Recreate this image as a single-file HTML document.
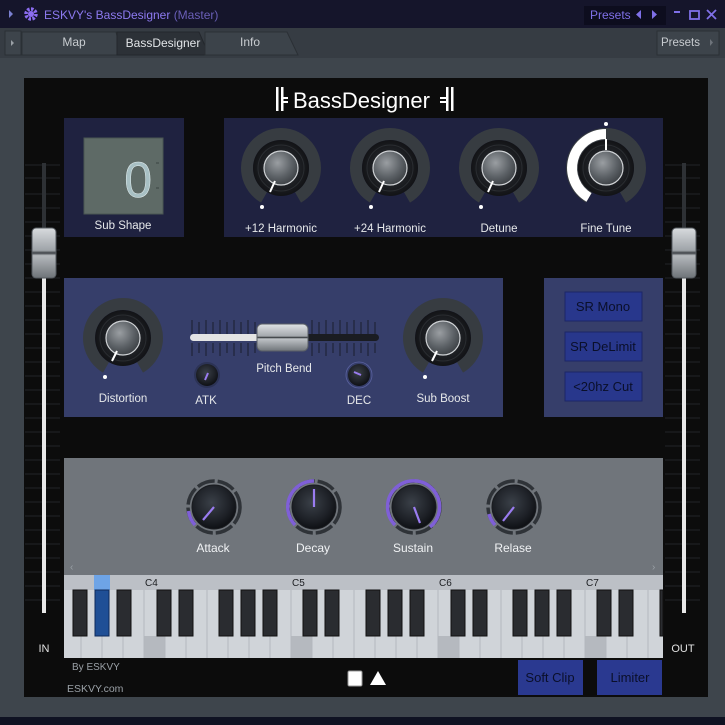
<!DOCTYPE html>
<html><head><meta charset="utf-8"><style>
html,body{margin:0;padding:0;background:#0f1020;}
svg{display:block;font-family:"Liberation Sans",sans-serif;}
</style></head><body>
<svg width="725" height="725" viewBox="0 0 725 725" xmlns="http://www.w3.org/2000/svg">
<defs>
<radialGradient id="cap" cx="0.4" cy="0.35" r="0.7"><stop offset="0" stop-color="#9a9ea2"/><stop offset="0.6" stop-color="#5c6166"/><stop offset="1" stop-color="#3a3e42"/></radialGradient>
<radialGradient id="disc" cx="0.5" cy="0.5" r="0.5"><stop offset="0" stop-color="#2a2d31"/><stop offset="0.7" stop-color="#1c1e22"/><stop offset="1" stop-color="#121316"/></radialGradient>
<radialGradient id="adsr" cx="0.45" cy="0.4" r="0.6"><stop offset="0" stop-color="#3a4048"/><stop offset="0.7" stop-color="#1d2026"/><stop offset="1" stop-color="#0e1014"/></radialGradient>
<linearGradient id="fad" x1="0" y1="0" x2="0" y2="1"><stop offset="0" stop-color="#d8dbde"/><stop offset="0.45" stop-color="#9ea3a8"/><stop offset="0.5" stop-color="#3c4045"/><stop offset="0.55" stop-color="#b5b9bd"/><stop offset="1" stop-color="#6e7378"/></linearGradient>
<linearGradient id="pb" x1="0" y1="0" x2="0" y2="1"><stop offset="0" stop-color="#e0e3e6"/><stop offset="0.45" stop-color="#a4a8ad"/><stop offset="0.5" stop-color="#2e3236"/><stop offset="0.55" stop-color="#bfc3c7"/><stop offset="1" stop-color="#70757a"/></linearGradient>
<g id="bigknob">
<path d="M -17 29.4 A 34 34 0 1 1 17 29.4" fill="none" stroke="#373c41" stroke-width="12"/>
<circle r="28" fill="url(#disc)"/>
<circle r="23" fill="none" stroke="#2a2d31" stroke-width="1"/>
<circle r="17" fill="url(#cap)" stroke="#d0d3d6" stroke-width="1.2"/>
</g>
</defs>

<rect width="725" height="28" fill="#15152b"/>
<path d="M9 10 L13 14 L9 18Z" fill="#7a7fd0"/>
<circle cx="31" cy="14" r="5" fill="none" stroke="#8b6cf0" stroke-width="3.5" stroke-dasharray="2.5 1.4"/>
<circle cx="31" cy="14" r="3" fill="#8b6cf0"/>
<text x="44" y="19" font-size="12" fill="#8d7af0">ESKVY's BassDesigner <tspan fill="#6a5fb8">(Master)</tspan></text>
<rect x="584" y="6" width="82" height="19" fill="#0d0d1e"/>
<text x="590" y="19" font-size="12" fill="#7f70e8">Presets</text>
<path d="M641 10 L636 14.5 L641 19Z M652 10 L657 14.5 L652 19Z" fill="#7f70e8"/>
<rect x="674" y="11" width="6" height="2" fill="#7f70e8"/>
<rect x="690" y="11" width="9" height="8" fill="none" stroke="#7f70e8" stroke-width="1.8"/>
<path d="M707 10 L716 19 M716 10 L707 19" stroke="#7f70e8" stroke-width="1.8"/>

<rect x="0" y="28" width="725" height="30" fill="#363c43"/>
<rect x="0" y="58" width="725" height="659" fill="#3e454c"/>
<rect x="0" y="717" width="725" height="8" fill="#0f1222"/>
<rect x="5" y="31" width="16" height="24" fill="#3d444b" stroke="#2a2f35"/>
<path d="M11 40 L14 43 L11 46Z" fill="#9aa0a6"/>
<path d="M22 55 L22 32 L116 32 L122 55Z" fill="#3c434a" stroke="#2b3035"/>
<path d="M117 55 L117 32 L199 32 L209 55Z" fill="#2c3137" stroke="#23272c"/>
<path d="M205 55 L205 32 L287 32 L298 55Z" fill="#3c434a" stroke="#2b3035"/>
<text x="74" y="46" font-size="12" fill="#c8ccd0" text-anchor="middle">Map</text>
<text x="163" y="47" font-size="12" fill="#e2e5e8" text-anchor="middle">BassDesigner</text>
<text x="250" y="46" font-size="12" fill="#c8ccd0" text-anchor="middle">Info</text>
<rect x="657" y="31" width="62" height="24" fill="#3d444b" stroke="#2b3035"/>
<text x="661" y="46" font-size="11.5" fill="#c8ccd0">Presets</text>
<path d="M710 39 L713 42.5 L710 46Z" fill="#6d737a"/>

<rect x="24" y="78" width="684" height="619" fill="#0c0c0c"/>
<rect x="276" y="87" width="2.5" height="24" fill="#fff"/><rect x="281" y="87" width="2.5" height="24" fill="#fff"/><rect x="281" y="97" width="7" height="2" fill="#fff"/><rect x="281" y="101" width="7" height="2" fill="#fff"/>
<text x="293" y="108" font-size="22" fill="#fff">BassDesigner</text>
<rect x="446" y="87" width="2.5" height="24" fill="#fff"/><rect x="451" y="87" width="2.5" height="24" fill="#fff"/><rect x="440" y="97" width="7" height="2" fill="#fff"/><rect x="440" y="101" width="7" height="2" fill="#fff"/>

<g stroke="#222428" stroke-width="1">
<path d="M25 165H60M25 178H60M25 194H60M25 208H60M25 222H60M25 236H60M25 250H60M25 264H60M25 278H60M25 292H60M25 306H60M25 320H60M25 334H60M25 348H60M25 362H60M25 376H60M25 390H60M25 404H60M25 418H60M25 432H60M25 446H60M25 460H60M25 474H60M25 488H60M25 502H60M25 516H60M25 530H60M25 544H60M25 558H60M25 572H60M25 586H60M25 600H60"/>
<path d="M665 165H700M665 178H700M665 194H700M665 208H700M665 222H700M665 236H700M665 250H700M665 264H700M665 278H700M665 292H700M665 306H700M665 320H700M665 334H700M665 348H700M665 362H700M665 376H700M665 390H700M665 404H700M665 418H700M665 432H700M665 446H700M665 460H700M665 474H700M665 488H700M665 502H700M665 516H700M665 530H700M665 544H700M665 558H700M665 572H700M665 586H700M665 600H700"/>
</g>
<rect x="42" y="163" width="4" height="112" fill="#2e3135"/><rect x="42" y="275" width="4" height="338" fill="#e8e8e8"/>
<rect x="682" y="163" width="4" height="112" fill="#2e3135"/><rect x="682" y="275" width="4" height="338" fill="#e8e8e8"/>
<rect x="32" y="228" width="24" height="50" rx="4" fill="url(#fad)" stroke="#555a60"/>
<rect x="672" y="228" width="24" height="50" rx="4" fill="url(#fad)" stroke="#555a60"/>
<text x="44" y="652" font-size="11" fill="#e0e0e0" text-anchor="middle">IN</text>
<text x="683" y="652" font-size="11" fill="#e0e0e0" text-anchor="middle">OUT</text>

<rect x="64" y="118" width="120" height="119" fill="#1f2240"/>
<rect x="84" y="138" width="79" height="76" fill="#5e6a66" stroke="#4a5552"/>
<text x="152" y="197" font-size="50" fill="#a8c0c4" text-anchor="end" stroke="#e0ecee" stroke-width="0.5">0</text>
<path d="M156 163h3M156 188h3" stroke="#3a4442"/>
<text x="123" y="229" font-size="11.5" fill="#e6e8ea" text-anchor="middle">Sub Shape</text>

<rect x="224" y="118" width="439" height="119" fill="#1f2240"/>
<use href="#bigknob" x="281" y="168"/><path d="M275 181 L270 192" stroke="#fff" stroke-width="2"/><circle cx="262" cy="207" r="2" fill="#fff"/>
<use href="#bigknob" x="390" y="168"/><path d="M384 181 L379 192" stroke="#fff" stroke-width="2"/><circle cx="371" cy="207" r="2" fill="#fff"/>
<use href="#bigknob" x="499" y="168"/><path d="M493 181 L488 192" stroke="#fff" stroke-width="2"/><circle cx="481" cy="207" r="2" fill="#fff"/>
<use href="#bigknob" x="606" y="168"/>
<path d="M589 197.4 A 34 34 0 0 1 606 134" fill="none" stroke="#fff" stroke-width="10"/>
<path d="M606 139 L606 150" stroke="#fff" stroke-width="2"/><circle cx="606" cy="124" r="2" fill="#fff"/>
<text x="281" y="232" font-size="11.5" fill="#e6e8ea" text-anchor="middle">+12 Harmonic</text>
<text x="390" y="232" font-size="11.5" fill="#e6e8ea" text-anchor="middle">+24 Harmonic</text>
<text x="499" y="232" font-size="11.5" fill="#e6e8ea" text-anchor="middle">Detune</text>
<text x="606" y="232" font-size="11.5" fill="#e6e8ea" text-anchor="middle">Fine Tune</text>

<rect x="64" y="278" width="439" height="139" fill="#363e6a"/>
<use href="#bigknob" x="123" y="338"/><path d="M117 351 L112 361" stroke="#fff" stroke-width="2"/><circle cx="105" cy="377" r="2" fill="#fff"/>
<use href="#bigknob" x="443" y="338"/><path d="M437 351 L432 361" stroke="#fff" stroke-width="2"/><circle cx="425" cy="377" r="2" fill="#fff"/>
<g stroke="#1a1d2e" stroke-width="1">
<path d="M192 320V334M199 322V334M206 320V334M213 322V334M220 320V334M227 322V334M234 320V334M241 322V334M248 320V334M255 322V334M312 320V334M319 322V334M326 320V334M333 322V334M340 320V334M347 322V334M354 320V334M361 322V334M368 320V334M375 322V334"/>
<path d="M192 343V356M199 343V353M206 343V356M213 343V353M220 343V356M227 343V353M234 343V356M241 343V353M248 343V356M255 343V353M312 343V356M319 343V353M326 343V356M333 343V353M340 343V356M347 343V353M354 343V356M361 343V353M368 343V356M375 343V353"/>
</g>
<rect x="190" y="334" width="70" height="7" rx="3.5" fill="#e4e4e4"/>
<rect x="300" y="334" width="79" height="7" rx="3.5" fill="#1a1c22"/>
<rect x="257" y="324" width="51" height="27" rx="5" fill="url(#pb)" stroke="#5a5f66"/>
<text x="284" y="372" font-size="11.5" fill="#e6e8ea" text-anchor="middle">Pitch Bend</text>
<circle cx="207" cy="375" r="13" fill="#2c3355"/><circle cx="207" cy="375" r="11" fill="url(#adsr)"/><path d="M205 380 L208 373" stroke="#9a7cf0" stroke-width="2"/>
<circle cx="359" cy="375" r="13" fill="none" stroke="#5a62a0" stroke-width="0.8"/><circle cx="359" cy="375" r="11" fill="url(#adsr)"/><path d="M354 372 L361 375" stroke="#9a7cf0" stroke-width="2"/>
<text x="206" y="404" font-size="11.5" fill="#e6e8ea" text-anchor="middle">ATK</text>
<text x="359" y="404" font-size="11.5" fill="#e6e8ea" text-anchor="middle">DEC</text>
<text x="123" y="402" font-size="11.5" fill="#e6e8ea" text-anchor="middle">Distortion</text>
<text x="443" y="402" font-size="11.5" fill="#e6e8ea" text-anchor="middle">Sub Boost</text>

<rect x="544" y="278" width="119" height="139" fill="#363e6a"/>
<g fill="#28378c" stroke="#1c2566">
<rect x="565" y="292" width="77" height="29"/><rect x="565" y="332" width="77" height="29"/><rect x="565" y="372" width="77" height="29"/>
</g>
<g font-size="13" fill="#0a0f2a" text-anchor="middle">
<text x="603" y="311">SR Mono</text><text x="603" y="351">SR DeLimit</text><text x="603" y="391">&lt;20hz Cut</text>
</g>

<rect x="64" y="458" width="599" height="117" fill="#70757b"/>
<g fill="none" stroke-width="3.5">
<circle cx="214" cy="507" r="26" stroke="#2f3338" stroke-dasharray="18 3"/>
<circle cx="314" cy="507" r="26" stroke="#2f3338" stroke-dasharray="18 3"/>
<circle cx="414" cy="507" r="26" stroke="#2f3338" stroke-dasharray="18 3"/>
<circle cx="514" cy="507" r="26" stroke="#2f3338" stroke-dasharray="18 3"/>
<path d="M195 525 A26 26 0 0 1 188.5 511" stroke="#7f5fd8"/>
<path d="M295 525 A26 26 0 0 1 314 481" stroke="#7f5fd8"/>
<path d="M395 525 A26 26 0 1 1 430 527" stroke="#7f5fd8"/>
<path d="M495 525 A26 26 0 0 1 489 514" stroke="#7f5fd8"/>
</g>
<circle cx="214" cy="507" r="22" fill="url(#adsr)" stroke="#1a1c20"/>
<circle cx="314" cy="507" r="22" fill="url(#adsr)" stroke="#1a1c20"/>
<circle cx="414" cy="507" r="22" fill="url(#adsr)" stroke="#1a1c20"/>
<circle cx="514" cy="507" r="22" fill="url(#adsr)" stroke="#1a1c20"/>
<g stroke="#9a7cf0" stroke-width="2.2">
<path d="M214 507 L203 520"/><path d="M314 507 L314 489"/><path d="M414 507 L420 523"/><path d="M514 507 L503 521"/>
</g>
<g font-size="12" fill="#f0f2f4" text-anchor="middle">
<text x="213" y="552">Attack</text><text x="313" y="552">Decay</text><text x="413" y="552">Sustain</text><text x="513" y="552">Relase</text>
</g>
<text x="70" y="570" font-size="10" fill="#9aa0a6">‹</text><text x="652" y="570" font-size="10" fill="#9aa0a6">›</text>

<rect x="64" y="575" width="599" height="83" fill="#d0d4d9"/>
<rect x="64" y="575" width="599" height="15" fill="#bcc0c6"/>
<rect x="94" y="575" width="16" height="15" fill="#6ea4e6"/>
<g fill="#b5b9bf"><rect x="144" y="636" width="21" height="22"/><rect x="291" y="636" width="21" height="22"/><rect x="438" y="636" width="21" height="22"/><rect x="585" y="636" width="21" height="22"/></g>
<g stroke="#b4b8be" stroke-width="1">
<path d="M81 590V658M102 590V658M123 590V658M144 590V658M165 590V658M186 590V658M207 590V658M228 590V658M249 590V658M270 590V658M291 590V658M312 590V658M333 590V658M354 590V658M375 590V658M396 590V658M417 590V658M438 590V658M459 590V658M480 590V658M501 590V658M522 590V658M543 590V658M564 590V658M585 590V658M606 590V658M627 590V658M648 590V658"/>
</g>
<g fill="#2a2c30" stroke="#111" stroke-width="1">
<rect x="73" y="590" width="14" height="46"/><rect x="117" y="590" width="14" height="46"/>
<rect x="157" y="590" width="14" height="46"/><rect x="179" y="590" width="14" height="46"/>
<rect x="219" y="590" width="14" height="46"/><rect x="241" y="590" width="14" height="46"/><rect x="263" y="590" width="14" height="46"/>
<rect x="303" y="590" width="14" height="46"/><rect x="325" y="590" width="14" height="46"/>
<rect x="366" y="590" width="14" height="46"/><rect x="388" y="590" width="14" height="46"/><rect x="410" y="590" width="14" height="46"/>
<rect x="451" y="590" width="14" height="46"/><rect x="473" y="590" width="14" height="46"/>
<rect x="513" y="590" width="14" height="46"/><rect x="535" y="590" width="14" height="46"/><rect x="557" y="590" width="14" height="46"/>
<rect x="597" y="590" width="14" height="46"/><rect x="619" y="590" width="14" height="46"/>
<rect x="660" y="590" width="3" height="46"/>
</g>
<rect x="95" y="590" width="14" height="46" fill="#1f4f96" stroke="#0e2a5a"/>
<g font-size="10" fill="#1c1e22">
<text x="145" y="586">C4</text><text x="292" y="586">C5</text><text x="439" y="586">C6</text><text x="586" y="586">C7</text>
</g>

<text x="72" y="670" font-size="10" fill="#9aa0a6">By ESKVY</text>
<text x="67" y="692" font-size="10.5" fill="#9aa0a6">ESKVY.com</text>
<rect x="348" y="671" width="14" height="15" rx="1.5" fill="#fff" stroke="#999"/>
<path d="M378 671 L386 685 L370 685Z" fill="#fff"/>
<rect x="518" y="660" width="65" height="35" fill="#2a3990"/>
<rect x="597" y="660" width="65" height="35" fill="#2a3990"/>
<text x="550" y="682" font-size="13" fill="#0a0f2a" text-anchor="middle">Soft Clip</text>
<text x="630" y="682" font-size="13" fill="#0a0f2a" text-anchor="middle">Limiter</text>
</svg>
</body></html>
